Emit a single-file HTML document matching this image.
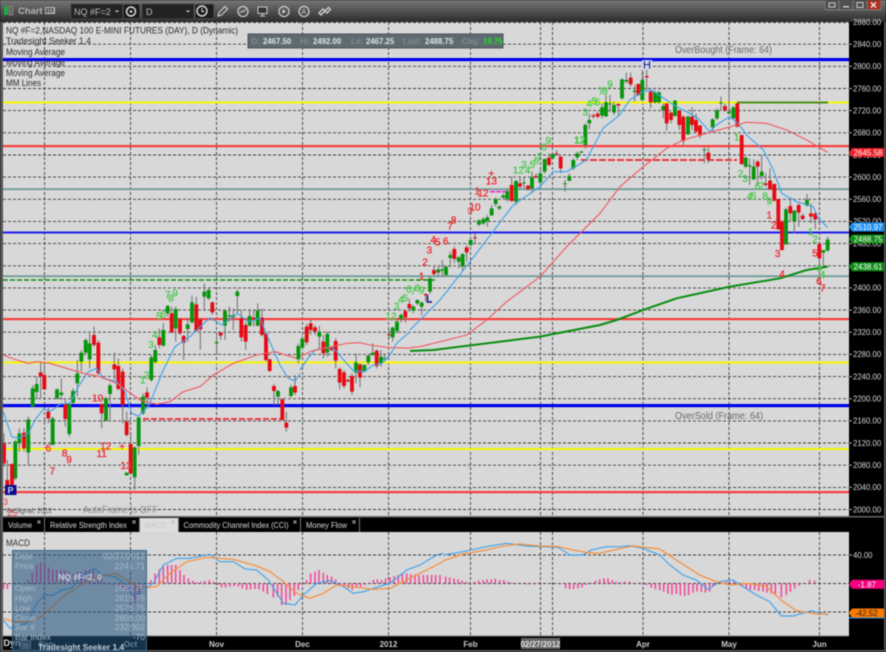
<!DOCTYPE html>
<html>
<head>
<meta charset="utf-8">
<style>
html,body{margin:0;padding:0;background:#000;width:886px;height:652px;overflow:hidden}
svg{display:block;filter:blur(.45px);font-family:"Liberation Sans",sans-serif}
.w{fill:none;stroke:#747474;stroke-width:3.2}
.g{fill:none;stroke:#06960c;stroke-width:11.5}
.r{fill:none;stroke:#e60a14;stroke-width:11.5}
.bl{fill:none;stroke:#3ea2ec;stroke-width:3.4}
.rd{fill:none;stroke:#f05a60;stroke-width:3.4}
.or{fill:none;stroke:#f59040;stroke-width:3.8}
.gm{fill:none;stroke:#0a8c10;stroke-width:6}
.h{fill:none;stroke:#f2479a;stroke-width:4.600}
.lg{fill:#4cc850;stroke:#4cc850;stroke-width:.9px;font-size:30px;text-anchor:middle}
.lr{fill:#f0282f;stroke:#f0282f;stroke-width:.9px;font-size:30px;text-anchor:middle}
.ax{fill:#d6d6d6;font-size:7.8px}
.lt{fill:#2c2c2c;font-size:9px}
.tab{fill:#d8d8d8;font-size:8.6px}
.tt{fill:#a9bacb;font-size:8.4px}
.ttr{fill:#a9bacb;font-size:8.4px;text-anchor:end}
.tag{fill:#fff;font-size:8px;text-anchor:end}
.mo{fill:#c8c8c8;font-size:8px;font-weight:bold;text-anchor:middle}
.ohl{fill:#dfe5e8;font-size:7.8px;font-weight:bold}
.ohd{fill:#7f8b90;font-size:7.8px;font-weight:bold}
</style>
</head>
<body>
<svg width="886" height="652" viewBox="0 0 886 652" xmlns="http://www.w3.org/2000/svg">
<defs>
<linearGradient id="tb" x1="0" y1="0" x2="0" y2="1"><stop offset="0" stop-color="#767676"/><stop offset="1" stop-color="#2c2c2c"/></linearGradient>
<clipPath id="plot"><rect x="3" y="22" width="846" height="494"/></clipPath>
<clipPath id="mp"><rect x="3" y="532" width="846" height="104"/></clipPath>
</defs>

<rect width="886" height="652" fill="#565656"/>
<rect x="0" y="0" width="886" height="22" fill="url(#tb)"/>

<!-- title bar left -->
<rect x="4" y="6" width="4" height="9" fill="#1fae3c"/>
<rect x="9" y="6" width="4" height="9" fill="#666" stroke="#999" stroke-width=".5"/>
<text x="18" y="14" fill="#b4b4b4" font-size="9.4" font-weight="bold">Chart</text>
<rect x="45.500" y="7.500" width="9" height="6" fill="none" stroke="#bbb"/>
<text x="47" y="13" fill="#ddd" font-size="5">151</text>

<rect x="71" y="4" width="52" height="15" fill="#232323" stroke="#444"/>
<text x="74" y="15" fill="#bdbdbd" font-size="9">NQ #F=2</text>
<path d="M115 10.500h4l-2 2z" fill="#ccc"/>
<rect x="123" y="4" width="17" height="15" rx="2" fill="#1c1c1c" stroke="#555"/>
<circle cx="131" cy="11.500" r="4.500" fill="none" stroke="#ddd" stroke-width="1.500"/>
<circle cx="131" cy="11.500" r="1.300" fill="#ddd"/>
<rect x="142" y="4" width="52" height="15" fill="#232323" stroke="#444"/>
<text x="146" y="15" fill="#bdbdbd" font-size="9">D</text>
<path d="M186 10.500h4l-2 2z" fill="#ccc"/>
<rect x="195" y="4" width="19" height="15" rx="2" fill="#1c1c1c" stroke="#555"/>
<circle cx="202" cy="11" r="5" fill="none" stroke="#ddd" stroke-width="1.400"/>
<path d="M202 8v3.500h2.500" fill="none" stroke="#ddd"/>
<path d="M218 16l1-3.500 6-6 2.500 2.500-6 6z" fill="none" stroke="#ccc" stroke-width="1.200"/>
<circle cx="243" cy="11.500" r="5" fill="none" stroke="#ccc" stroke-width="1.300"/>
<path d="M240 13l2-2 1.500 1 2.500-3" fill="none" stroke="#ccc"/>
<rect x="258" y="7" width="9" height="6.500" fill="#333" stroke="#ccc"/>
<path d="M260 16h5M262.500 13.500v2" stroke="#ccc"/>
<circle cx="284" cy="11.500" r="5" fill="none" stroke="#ccc" stroke-width="1.300"/>
<path d="M282.500 9l3.500 2.500-3.500 2.500z" fill="#ccc"/>
<circle cx="304" cy="11.500" r="5" fill="none" stroke="#ccc" stroke-width="1.300"/>
<text x="301.500" y="14" fill="#ccc" font-size="7">A</text>
<path d="M319 13l4-4 2 2-4 4zM325 11l3.500-3.500 2 2-3.500 3.500z" fill="none" stroke="#ccc" stroke-width="1.400"/>

<!-- window controls -->
<rect x="825" y="0" width="14" height="10" rx="1.500" fill="#505050" stroke="#7a7a7a"/>
<rect x="829" y="3" width="6" height="4" fill="none" stroke="#ccc"/>
<rect x="839" y="0" width="14" height="10" rx="1.500" fill="#505050" stroke="#7a7a7a"/>
<rect x="843" y="6" width="6" height="1.500" fill="#ccc"/>
<rect x="853" y="0" width="14" height="10" rx="1.500" fill="#505050" stroke="#7a7a7a"/>
<rect x="857" y="2.500" width="6" height="5" fill="none" stroke="#ccc"/>
<rect x="867" y="0" width="14" height="10" rx="1.500" fill="#b03020" stroke="#7a7a7a"/>
<path d="M871 2.500l5 5M876 2.500l-5 5" stroke="#eee" stroke-width="1.300"/>

<!-- axis + panels -->
<rect x="3" y="22" width="881" height="628" fill="#000"/>
<rect x="3" y="22" width="846" height="494" fill="#d8d8d8"/>
<rect x="3" y="532" width="846" height="104" fill="#d8d8d8"/>
<rect x="3" y="516" width="881" height="1.500" fill="#666"/>

<!-- grid -->
<g clip-path="url(#plot)">
<path fill="none" stroke="#3c3c3c" stroke-width=".9" stroke-dasharray="3 2" d="M3 22.500H849M3 44.200H849M3 66.300H849M3 88.500H849M3 110.600H849M3 132.800H849M3 155H849M3 177.100H849M3 199.300H849M3 221.400H849M3 243.600H849M3 265.800H849M3 287.900H849M3 310.100H849M3 332.200H849M3 354.400H849M3 376.600H849M3 398.700H849M3 420.900H849M3 443H849M3 465.200H849M3 487.400H849M3 509.500H849"/>
<path fill="none" stroke="#3c3c3c" stroke-width=".9" stroke-dasharray="3 2" d="M44.500 22V516M130.500 22V516M216.500 22V516M302.500 22V516M388.500 22V516M470.500 22V516M540.500 22V516M552.500 22V516M643 22V516M729 22V516M819.500 22V516"/>
<!-- levels -->
<rect x="3" y="58" width="846" height="3.200" fill="#0000f0"/>
<rect x="3" y="101.500" width="846" height="2" fill="#f7f700"/>
<rect x="3" y="145" width="846" height="2.200" fill="#fa3c3c"/>
<rect x="3" y="188.300" width="846" height="1.800" fill="#6d9a98"/>
<rect x="3" y="231.500" width="846" height="2" fill="#1c1cf0"/>
<rect x="3" y="275.300" width="846" height="1.800" fill="#6d9a98"/>
<rect x="3" y="318" width="846" height="2.200" fill="#fa3c3c"/>
<rect x="3" y="361.500" width="846" height="2" fill="#f7f700"/>
<rect x="3" y="404" width="846" height="3.200" fill="#0000f0"/>
<rect x="3" y="448" width="846" height="2" fill="#f7f700"/>
<rect x="3" y="491" width="846" height="2.200" fill="#fa3c3c"/>

<path d="M3 280H435" stroke="#0a900f" stroke-width="1.600" stroke-dasharray="5 2" fill="none"/>
<path d="M143 419H283M283 419V405" stroke="#ee2a32" stroke-width="1.800" stroke-dasharray="6 2" fill="none"/>
<path d="M581 160H737" stroke="#f02028" stroke-width="1.700" stroke-dasharray="7 2" fill="none"/>
<path d="M490 191.700H507" stroke="#f020d0" stroke-width="1.500" stroke-dasharray="5 1" fill="none"/>
<path d="M737 102.500H828" stroke="#4e8f12" stroke-width="2" fill="none"/>

<!-- candles set 1 -->
<g transform="translate(0,280) scale(.33333)">
<path class="w" d="M12 460V560M22 540V630M36 550V620M46 480V600M58 445V515M72 445V515M85 410V555M98 315V380M110 290V358M122 245V355M133 245V330M145 380V430M158 410V495M171 325V358M184 295V360M196 355V440M208 368V470M219 325V372M232 240V350M244 210V275M257 175V225M269 160V265M282 140V200M295 180V285M305 370V445M318 350V425M330 310V420M343 218V300M355 235V330M368 265V430M380 395V470M392 455V585M404 500V630M416 410V525M429 340V405M441 322V385M454 225V305M466 195V250M478 145V205M490 130V200M503 75V110M515 80V160M527 80V185M540 115V165M551 165V240M563 115V185M576 47V130M589 50V155M601 115V210M613 10V90M626 25V60M637 65V105M650 160V225M662 155V180M675 90V180M688 80V125M700 85V150M712 28V100M724 90V185M737 125V210M749 92V140M761 90V140M773 70V140M786 85V170M798 160V245M809 235V275M822 312V375M834 330V375M847 355V422M859 395V455"/>
<path class="g" d="M46 485V595M58 460V490M85 418V518M98 325V380M110 312V336M158 415V495M171 328V355M184 338V345M208 372V462M219 333V368M232 280V310M244 218V245M257 180V218M269 190V238M318 355V422M330 316V342M380 578V586M404 502V592M416 412V498M429 350V400M454 232V300M466 210V246M490 150V197M503 78V100M527 87V145M563 133V147M576 67V127M613 35V50M626 30V55M650 186V190M675 92V137M688 106V110M700 106V112M712 35V48M749 108V137M773 92V137M834 333V350"/>
<path class="r" d="M12 490V550M22 600V630M36 552V618M72 458V505M122 277V290M133 285V328M145 395V415M196 372V417M282 165V195M295 188V280M305 372V400M343 253V268M355 258V327M368 275V375M380 425V465M392 492V580M441 337V353M478 172V195M515 100V157M540 117V160M551 168V188M589 73V153M601 118V148M637 67V97M662 158V167M724 115V172M737 135V185M761 113V118M786 113V165M798 160V240M809 238V273M822 318V333M847 358V420M859 428V443"/>
</g>
<!-- candles set 2 -->
<g transform="translate(290,310) scale(.33333)">
<path class="w" d="M3 225V262M15 195V255M25 100V160M37 78V120M50 40V105M62 30V75M75 45V75M88 48V120M100 75V145M112 65V140M125 108V124M137 85V175M149 172V238M162 180V235M174 205V218M186 190V255M198 130V220M210 160V232M223 163V188M235 130V165M248 100V138M260 118V175M273 120V170M284 130V155M297 60V85"/>
<path class="g" d="M3 232V258M25 108V148M37 86V113M88 65V80M112 72V128M198 157V188M223 165V185M235 137V157M248 128V135M273 140V160M284 145V148"/>
<path class="r" d="M15 228V248M50 50V97M62 40V60M75 52V65M100 95V130M125 112V120M137 93V152M149 177V218M162 187V228M174 210V214M186 198V245M210 163V203M260 122V168M297 73V76"/>
</g>
<!-- candles set 3 -->
<g transform="translate(300,130) scale(.33333)">
<path class="w" d="M278 590V635M291 565V610M303 550V578M316 540V578M328 505V545M340 525V550M352 508V525M365 515V555M377 490V515M390 440V492M402 408V440M415 408V440M427 390V440M438 408V440M451 365V412M463 350V400M476 378V415M488 370V425M500 345V395M512 320V350M525 310V340M537 268V288M550 262V285M562 255V290M575 225V258M587 202V230M598 225V240M610 190V205M622 175V215M635 140V215M648 150V225M660 140V175M672 140V175M684 165V182M696 125V190M708 130V145M721 115V165M734 85V130M747 70V108M758 65V90M770 60V78M782 78V130M795 150V185M808 130V155M820 85V120M832 65V90M844 62V70"/>
<path class="g" d="M278 593V622M291 575V603M303 555V567M340 530V542M352 510V520M365 518V530M390 445V485M415 418V428M427 418V422M438 410V435M451 375V384M476 382V395M488 372V410M512 330V345M537 271V284M550 267V280M562 262V273M575 235V256M587 207V222M598 230V236M610 196V203M622 183V207M648 153V215M672 157V160M696 142V175M721 130V157M734 87V125M758 72V85M795 160V163M808 138V152M820 90V115M832 70V82M844 65V68"/>
<path class="r" d="M316 543V562M328 522V535M377 492V496M402 420V432M463 357V387M500 352V367M525 322V325M635 165V213M660 160V170M684 167V178M708 138V142M747 83V105M770 70V73M782 80V115"/>
</g>
<!-- candles set 4 -->
<g transform="translate(560,70) scale(.33333)">
<path class="w" d="M76 160V235M88 130V178M100 130V145M113 125V145M126 100V145M138 75V140M150 75V125M162 95V135M175 100V135M186 25V88M199 8V40M212 8V50M224 45V95M235 40V78M247 0V95M260 -10V60M272 60V115M285 62V100M297 62V100M310 100V145"/>
<path class="g" d="M76 165V225M88 150V160M126 112V137M138 97V140M150 100V103M162 105V128M186 28V85M199 30V35M224 62V66M247 30V90M285 67V97M297 67V97M310 108V122"/>
<path class="r" d="M100 136V140M113 131V140M175 102V107M212 23V43M235 42V75M260 18V22M272 65V97"/>
</g>
<!-- candles set 5 -->
<g transform="translate(600,70) scale(.33333)">
<path class="w" d="M200 100V182M213 125V160M225 90V140M238 120V180M250 135V225M264 135V195M276 112V180M288 130V190M300 165V205M313 232V280M325 232V280M338 145V185M351 115V150M363 80V120M375 100V125M387 40V135M400 108V150M412 100V172M425 195V285M437 258V295M449 265V345M461 268V330M473 270V345M485 255V330M497 310V350M510 295V360M523 340V395M535 385V480M546 450V542M558 412V525M571 390V455M583 420V490M596 400V470M608 430V450M621 372V410M633 400V460M646 425V478M658 515V585M670 540V585M683 500V545"/>
<path class="g" d="M225 92V138M264 140V193M313 238V241M338 148V172M351 122V145M363 97V100M387 125V130M400 112V145M437 263V290M449 286V290M461 290V328M485 305V318M558 418V523M583 422V455M621 390V407M670 540V548M683 508V542"/>
<path class="r" d="M200 100V160M213 128V150M238 122V165M250 140V213M276 140V165M288 150V185M300 167V197M325 248V268M375 108V122M412 100V170M425 195V282M473 275V290M497 340V345M510 332V358M523 342V392M535 387V478M546 455V540M571 408V430M596 405V428M608 437V447M633 430V440M646 430V448M658 522V565"/>
</g>

<!-- MAs -->
<g transform="translate(0,280) scale(.33333)">
<path class="bl" d="M10 395L35 470 55 475 85 460 105 420 130 388 155 392 180 372 210 370 235 320 265 275 290 265 310 295 350 305 375 335 395 400 415 408 445 380 470 320 490 270 525 200 570 170 590 150 630 113 665 135 700 110 712 100 745 125 780 115 805 175 840 255 865 295 885 303 900 280"/>
<path class="rd" d="M10 225L50 240 85 250 110 245 150 250 190 262 250 280 300 290 350 310 385 335 420 360 470 373 510 365 550 335 600 320 640 285 700 250 770 225 825 215 890 235"/>
</g>
<g transform="translate(290,310) scale(.33333)">
<path class="bl" d="M30 180L50 150 75 120 100 115 125 112 140 125 165 155 190 182 222 185 250 165 275 160 300 135 320 100 360 65"/>
<path class="rd" d="M30 140L60 125 100 115 125 110 170 100 210 98 240 105 290 112 360 115"/>
</g>
<g transform="translate(300,130) scale(.33333)">
<path class="bl" d="M330 600L360 570 420 510 510 395 575 310 640 225 720 170 760 125 800 125 860 90"/>
<path class="rd" d="M330 653L360 650 500 615 560 570 620 515 720 440 800 350 900 250"/>
<path class="gm" d="M330 663L400 660 720 620 900 585"/>
</g>
<g transform="translate(443,0) scale(.33333)">
<path class="bl" d="M430 480L480 385 530 345 560 300 600 275 625 270 670 300 700 320 740 340 765 355 800 395 820 375 860 350 885 370"/>
</g>
<g transform="translate(600,70) scale(.33333)">
<path class="bl" d="M415 160L440 195 490 240 520 300 545 370 590 395 640 410 655 445 683 472"/>
<path class="rd" d="M0 430L60 350 130 290 200 235 250 210 320 190 410 165 440 157 500 160 560 180 620 210 683 247"/>
<path class="gm" d="M0 765L50 750 130 720 230 685 390 650 540 625 620 600 683 590"/>
</g>

<!-- numerals -->
<g transform="translate(0,280) scale(.33333)">
<text class="lg" x="503" y="54">7</text><text class="lg" x="513" y="64">8</text><text class="lg" x="525" y="49">9</text>
<text class="lg" x="477" y="119">5</text><text class="lg" x="490" y="112">6</text><text class="lg" x="465" y="174">4</text><text class="lg" x="453" y="204">3</text><text class="lg" x="440" y="296">2</text><text class="lg" x="428" y="311">1</text>
<text class="lr" x="293" y="365">10</text><text class="lr" x="145" y="514">6</text><text class="lr" x="194" y="529">8</text><text class="lr" x="207" y="549">9</text><text class="lr" x="157" y="584">7</text><text class="lr" x="317" y="509">12</text><text class="lr" x="305" y="531">11</text><text class="lr" x="378" y="567">13</text><text class="lr" x="366" y="510">+</text>
</g>
<g transform="translate(300,130) scale(.33333)">
<text class="lg" x="273" y="569">12</text><text class="lg" x="290" y="539">3</text><text class="lg" x="303" y="519">4</text><text class="lg" x="316" y="514">5</text><text class="lg" x="326" y="487">6</text><text class="lg" x="339" y="494">7</text><text class="lg" x="352" y="484">8</text><text class="lg" x="365" y="491">9</text>
<text class="lr" x="365" y="449">1</text><text class="lr" x="375" y="407">2</text><text class="lr" x="388" y="371">3</text><text class="lr" x="400" y="339">4</text><text class="lr" x="413" y="347">5</text><text class="lr" x="437" y="344">6</text><text class="lr" x="450" y="299">7</text><text class="lr" x="461" y="281">8</text><text class="lr" x="510" y="254" opacity=".6">9</text><text class="lr" x="525" y="241">10</text><text class="lr" x="532" y="193">1</text><text class="lr" x="549" y="199">12</text><text class="lr" x="574" y="164">13</text><text class="lr" x="574" y="141">+</text>
<text class="lg" x="655" y="131">12</text><text class="lg" x="672" y="114">3</text><text class="lg" x="683" y="131">4</text><text class="lg" x="697" y="114">5</text><text class="lg" x="709" y="102">6</text><text class="lg" x="719" y="91">7</text><text class="lg" x="732" y="61">8</text><text class="lg" x="745" y="42">9</text><text class="lg" x="838" y="41">12</text>
</g>
<g transform="translate(560,70) scale(.33333)">
<text class="lg" x="60" y="221">12</text><text class="lg" x="76" y="137">3</text><text class="lg" x="88" y="111">4</text><text class="lg" x="103" y="104">5</text><text class="lg" x="112" y="106">6</text><text class="lg" x="123" y="74">7</text><text class="lg" x="135" y="74">8</text><text class="lg" x="150" y="52">9</text>
</g>
<g transform="translate(600,70) scale(.33333)">
<text class="lg" x="410" y="211">1</text><text class="lg" x="422" y="321">2</text><text class="lg" x="435" y="336">3</text><text class="lg" x="449" y="389">4</text><text class="lg" x="461" y="389">5</text><text class="lg" x="473" y="359">6</text><text class="lg" x="485" y="359">7</text><text class="lg" x="495" y="389">8</text><text class="lg" x="508" y="404">9</text><text class="lg" x="632" y="495">1</text><text class="lg" x="645" y="517">2</text><text class="lg" x="658" y="604">3</text><text class="lg" x="668" y="624">4</text>
<text class="lr" x="508" y="446">1</text><text class="lr" x="521" y="476">2</text><text class="lr" x="533" y="561">3</text><text class="lr" x="546" y="622">4</text><text class="lr" x="645" y="559">5</text><text class="lr" x="657" y="644">6</text><text class="lr" x="668" y="664">7</text>
</g>

<!-- H / L / P markers -->
<rect x="642" y="60" width="10" height="10" fill="#cfd6ea"/>
<text x="647" y="68.500" fill="#10107a" font-size="11" text-anchor="middle">H</text>
<path d="M427.500 295V302H432" fill="none" stroke="#10107a" stroke-width="1.500"/>
<rect x="5" y="485" width="11.500" height="10" fill="#0c0c8a"/>
<text x="7.500" y="493.500" fill="#c8d0f0" font-size="9" font-weight="bold">P</text>
<text x="3" y="505" fill="#f03a40" font-size="9">3</text>
<text x="7" y="516" fill="#f03a40" font-size="9">25</text>

<!-- text on chart -->
<text class="lt" x="6" y="33.500" textLength="232" lengthAdjust="spacingAndGlyphs">NQ #F=2,NASDAQ 100 E-MINI FUTURES (DAY), D (Dynamic)</text>
<text class="lt" x="6" y="44" textLength="85" lengthAdjust="spacingAndGlyphs">Tradesight Seeker 1.4</text>
<text class="lt" x="6" y="55" textLength="59" lengthAdjust="spacingAndGlyphs">Moving Average</text>
<text class="lt" x="6" y="65.500" textLength="59" lengthAdjust="spacingAndGlyphs">Moving Average</text>
<text class="lt" x="6" y="76" textLength="59" lengthAdjust="spacingAndGlyphs">Moving Average</text>
<text class="lt" x="6" y="86" textLength="35" lengthAdjust="spacingAndGlyphs">MM Lines</text>

<rect x="248" y="34" width="255" height="14" fill="#5f6b71" stroke="#48535a"/>
<text class="ohd" x="251" y="44">O:</text><text class="ohl" x="263" y="44">2467.50</text>
<text class="ohd" x="300" y="44">Hi:</text><text class="ohl" x="313" y="44">2492.00</text>
<text class="ohd" x="351" y="44">Lo:</text><text class="ohl" x="366" y="44">2467.25</text>
<text class="ohd" x="403" y="44">Last:</text><text class="ohl" x="425" y="44">2488.75</text>
<text class="ohd" x="462" y="44">Chg:</text><text x="483" y="44" fill="#22dd22" font-size="7.8" font-weight="bold">19.75</text>

<text x="675" y="53" fill="#6a6a6a" font-size="10" textLength="97" lengthAdjust="spacingAndGlyphs">OverBought (Frame: 64)</text>
<text x="675" y="419" fill="#6a6a6a" font-size="10" textLength="88" lengthAdjust="spacingAndGlyphs">OverSold (Frame: 64)</text>
<text x="83" y="513" fill="#8a8a8a" font-size="10" textLength="75" lengthAdjust="spacingAndGlyphs">AutoFrame is OFF</text>
<text x="6" y="513" fill="#555" font-size="7.500" textLength="46" lengthAdjust="spacingAndGlyphs">©eSignal, 2012</text>
</g>

<!-- price axis -->
<path stroke="#aaa" stroke-width="1" fill="none" d="M849 44.200h3M849 66.300h3M849 88.500h3M849 110.600h3M849 132.800h3M849 155h3M849 177.100h3M849 199.300h3M849 221.400h3M849 243.600h3M849 265.800h3M849 287.900h3M849 310.100h3M849 332.200h3M849 354.400h3M849 376.600h3M849 398.700h3M849 420.900h3M849 443h3M849 465.200h3M849 487.400h3M849 509.500h3"/>
<text class="ax" x="853" y="25">2880.00</text><text class="ax" x="853" y="47">2840.00</text><text class="ax" x="853" y="69">2800.00</text><text class="ax" x="853" y="91.300">2760.00</text><text class="ax" x="853" y="113.400">2720.00</text><text class="ax" x="853" y="135.600">2680.00</text><text class="ax" x="853" y="157.800">2640.00</text><text class="ax" x="853" y="179.900">2600.00</text><text class="ax" x="853" y="202.100">2560.00</text><text class="ax" x="853" y="224.200">2520.00</text><text class="ax" x="853" y="246.400">2480.00</text><text class="ax" x="853" y="268.600">2440.00</text><text class="ax" x="853" y="290.700">2400.00</text><text class="ax" x="853" y="312.900">2360.00</text><text class="ax" x="853" y="335">2320.00</text><text class="ax" x="853" y="357.200">2280.00</text><text class="ax" x="853" y="379.400">2240.00</text><text class="ax" x="853" y="401.500">2200.00</text><text class="ax" x="853" y="423.700">2160.00</text><text class="ax" x="853" y="445.800">2120.00</text><text class="ax" x="853" y="468">2080.00</text><text class="ax" x="853" y="490.200">2040.00</text><text class="ax" x="853" y="512.300">2000.00</text>

<!-- tags -->
<path d="M849 152.500l3-4.500h32v9h-32z" fill="#ee1c24"/><text class="tag" x="882.500" y="155.500">2645.58</text>
<path d="M849 227l3-4.500h32v9h-32z" fill="#1c8ef0"/><text class="tag" x="882.500" y="230">2510.97</text>
<path d="M849 239l3-4.500h32v9h-32z" fill="#0b8a12"/><text class="tag" x="882.500" y="242">2488.75</text>
<path d="M849 266.700l3-4.500h32v9h-32z" fill="#0b8a12"/><text class="tag" x="882.500" y="269.700">2438.61</text>

<!-- tabs -->
<rect x="3" y="517.500" width="881" height="14.500" fill="#000"/>
<rect x="140" y="518" width="38" height="14" fill="#dedede"/>
<path d="M44.500 518V532M139.500 518V532M178.500 518V532M300.500 518V532M359.500 518V532" stroke="#777"/>
<text class="tab" x="8" y="528" textLength="24" lengthAdjust="spacingAndGlyphs">Volume</text>
<text class="tab" x="50" y="528" textLength="77" lengthAdjust="spacingAndGlyphs">Relative Strength Index</text>
<text x="145" y="528" fill="#c8c8c8" font-size="8.600" textLength="21" lengthAdjust="spacingAndGlyphs">MACD</text>
<text class="tab" x="183.500" y="528" textLength="105" lengthAdjust="spacingAndGlyphs">Commodity Channel Index (CCI)</text>
<text class="tab" x="306" y="528" textLength="41" lengthAdjust="spacingAndGlyphs">Money Flow</text>
<path d="M37.500 520.500l3 3M40.500 520.500l-3 3M132.500 520.500l3 3M135.500 520.500l-3 3M171.500 520.500l3 3M174.500 520.500l-3 3M293.500 520.500l3 3M296.500 520.500l-3 3M352.500 520.500l3 3M355.500 520.500l-3 3" stroke="#bbb" fill="none" stroke-width=".9"/>

<!-- MACD panel -->
<g clip-path="url(#mp)">
<path fill="none" stroke="#3c3c3c" stroke-width=".9" stroke-dasharray="3 2" d="M3 555H849M3 583.500H849M3 612H849"/>
<path fill="none" stroke="#3c3c3c" stroke-width=".9" stroke-dasharray="3 2" d="M44.500 532V636M130.500 532V636M216.500 532V636M302.500 532V636M388.500 532V636M470.500 532V636M540.500 532V636M552.500 532V636M643 532V636M729 532V636M819.500 532V636"/>
<text x="6" y="546" fill="#333" font-size="9.500" textLength="24" lengthAdjust="spacingAndGlyphs">MACD</text>
<g transform="translate(0,490) scale(.33333)">
<path class="h" d="M10 280V297M22 280V297M85 280V270M97 280V250M110 280V225M122 280V218M134 280V222M146 280V232M158 280V238M170 280V240M183 280V240M195 280V240M207 280V245M220 280V250M232 280V245M244 280V245M256 280V240M268 280V240M280 280V240M293 280V250M305 280V265M330 280V285M342 280V287M355 280V290M368 280V295M380 280V300M392 280V320M405 280V340M417 280V320M430 280V300M453 280V270M465 280V250M478 280V238M490 280V230M503 280V225M515 280V225M527 280V225M540 280V240M552 280V255M565 280V265M578 280V272M590 280V276M603 280V275M615 280V273M628 280V270M640 280V275M652 280V285M665 280V292M677 280V292M690 280V290M702 280V288M715 280V290M727 280V295M740 280V300M752 280V298M765 280V297M777 280V298M790 280V305M802 280V312M820 280V322M833 280V320M845 280V345M858 280V345M870 280V330M883 280V318M895 280V300M907 280V285M920 280V270M932 280V250M945 280V245M957 280V240M970 280V248M982 280V255M995 280V260M1007 280V268M1020 280V285M1032 280V290M1045 280V295M1057 280V300M1070 280V290M1082 280V290M1095 280V285M1107 280V278M1120 280V270M1132 280V268M1145 280V270M1157 280V265M1170 280V262M1182 280V258M1195 280V255M1207 280V250M1220 280V250M1232 280V253M1245 280V253M1257 280V255M1270 280V255M1282 280V255M1295 280V255M1307 280V255M1320 280V255"/>
<path class="bl" d="M10 390L30 415 80 400 110 340 135 315 160 315 185 300 215 295 250 255 285 235 305 255 345 260 380 285 400 320 430 300 460 280 490 225 530 205 570 205 630 193 660 215 700 215 735 237 770 240 805 270 850 340 885 345 910 315 950 280 990 272 1030 290 1060 310 1090 305 1130 292 1170 280 1220 240 1260 225 1310 195 1329 190"/>
<path class="or" d="M10 385L40 395 90 395 125 380 190 320 250 280 300 258 345 250 380 270 420 295 470 290 510 250 560 215 620 202 700 208 770 228 810 245 850 275 890 310 930 325 970 310 1010 285 1060 290 1120 298 1170 295 1240 260 1329 215"/>
</g>
<g transform="translate(443,490) scale(.33333)">
<path class="h" d="M8 280V260M20 280V262M33 280V265M45 280V268M57 280V272M70 280V275M82 280V278M95 280V275M107 280V272M120 280V270M132 280V268M145 280V268M157 280V266M170 280V270M182 280V270M195 280V275M207 280V278M250 280V283M262 280V284M275 280V283M320 280V281M350 280V283M368 280V295M380 280V297M392 280V297M405 280V295M417 280V292M430 280V285M445 280V278M457 280V272M470 280V268M483 280V265M495 280V265M508 280V270M520 280V275M533 280V277M545 280V275M560 280V275M600 280V284M610 280V285M625 280V293M637 280V297M650 280V300M662 280V305M675 280V312M687 280V314M700 280V312M712 280V316M725 280V318M737 280V315M750 280V308M762 280V305M775 280V306M787 280V308M800 280V305M810 280V290M822 280V282M835 280V278M850 280V275M860 280V275M872 280V275M885 280V285M897 280V290M910 280V295M922 280V300M935 280V300M947 280V303M960 280V305M972 280V308M985 280V310M997 280V312M1015 280V322M1030 280V315M1042 280V305M1055 280V295M1068 280V287M1080 280V282M1100 280V270M1115 280V272M1130 280V280M1142 280V282M1155 280V280"/>
<path class="bl" d="M0 195L60 185 130 170 190 160 250 168 345 172 380 195 420 195 445 180 490 170 530 170 560 167 600 175 650 195 680 225 720 255 760 270 795 298 830 275 870 270 900 290 940 315 980 335 1015 378 1050 378 1105 362 1155 375"/>
<path class="or" d="M0 213L60 192 130 180 180 168 230 162 290 168 345 170 390 180 430 187 470 190 520 178 570 168 650 177 700 210 770 255 820 275 860 285 920 280 970 290 1020 335 1060 362 1120 372 1155 372"/>
</g>
</g>

<!-- MACD axis -->
<path stroke="#aaa" fill="none" d="M849 555h3M849 612h3"/>
<text class="ax" x="853" y="558">40.00</text>
<rect x="849" y="617" width="35" height="1.500" fill="#1c8ef0"/>
<path d="M849 584.300l3-4.500h32v9h-32z" fill="#f5007e"/><text class="tag" x="876" y="587.300">-1.87</text>
<path d="M849 613l3-4.500h32v9h-32z" fill="#ff7a00"/><text x="855" y="616" fill="#222" font-size="8">-42.52</text>

<!-- date axis -->
<rect x="3" y="636" width="881" height="14" fill="#000"/>
<rect x="3" y="635.500" width="846" height="1" fill="#777"/>
<text x="3.500" y="646" fill="#e0e0e0" font-size="9" font-weight="bold">Dyn</text>
<rect x="20.500" y="640.500" width="10" height="8" fill="#3b3b3b" stroke="#888"/>
<text x="22.500" y="647" fill="#ddd" font-size="6">ltp</text>
<text class="mo" x="46" y="647">Sep</text><text class="mo" x="130.500" y="647">Oct</text><text class="mo" x="216.500" y="647">Nov</text><text class="mo" x="302.500" y="647">Dec</text><text class="mo" x="388.500" y="647">2012</text><text class="mo" x="470.500" y="647">Feb</text><text class="mo" x="643" y="647">Apr</text><text class="mo" x="729" y="647">May</text><text class="mo" x="819.500" y="647">Jun</text>
<rect x="521" y="638" width="39" height="11" fill="#666"/>
<text x="540.500" y="647" fill="#e6e6e6" font-size="8" font-weight="bold" text-anchor="middle">02/27/2012</text>

<!-- tooltip overlay -->
<rect x="12.500" y="550.500" width="134" height="101" fill="rgba(37,85,125,.59)" stroke="#3f6888" stroke-width="1"/>
<text class="tt" x="15" y="559">Date</text><text class="ttr" x="145" y="559">02/27/2012</text>
<text class="tt" x="15" y="569">Price</text><text class="ttr" x="145" y="569">2241.71</text>
<text x="80" y="580" fill="#c4d2df" font-size="8.400" font-weight="bold" text-anchor="middle">NQ #F=2, 0</text>
<text class="tt" x="15" y="591">Open</text><text class="ttr" x="145" y="591">2582.75</text>
<text class="tt" x="15" y="601">High</text><text class="ttr" x="145" y="601">2618.75</text>
<text class="tt" x="15" y="611">Low</text><text class="ttr" x="145" y="611">2578.75</text>
<text class="tt" x="15" y="621">Close</text><text class="ttr" x="145" y="621">2608.00</text>
<text class="tt" x="15" y="630">Bar #</text><text class="ttr" x="145" y="630">232/302</text>
<text class="tt" x="15" y="640">Bar Index</text><text class="ttr" x="145" y="640">-70</text>
<text x="38" y="650" fill="#c0ccd8" font-size="8.400" font-weight="bold">Tradesight Seeker 1.4</text>
</svg>
</body>
</html>
